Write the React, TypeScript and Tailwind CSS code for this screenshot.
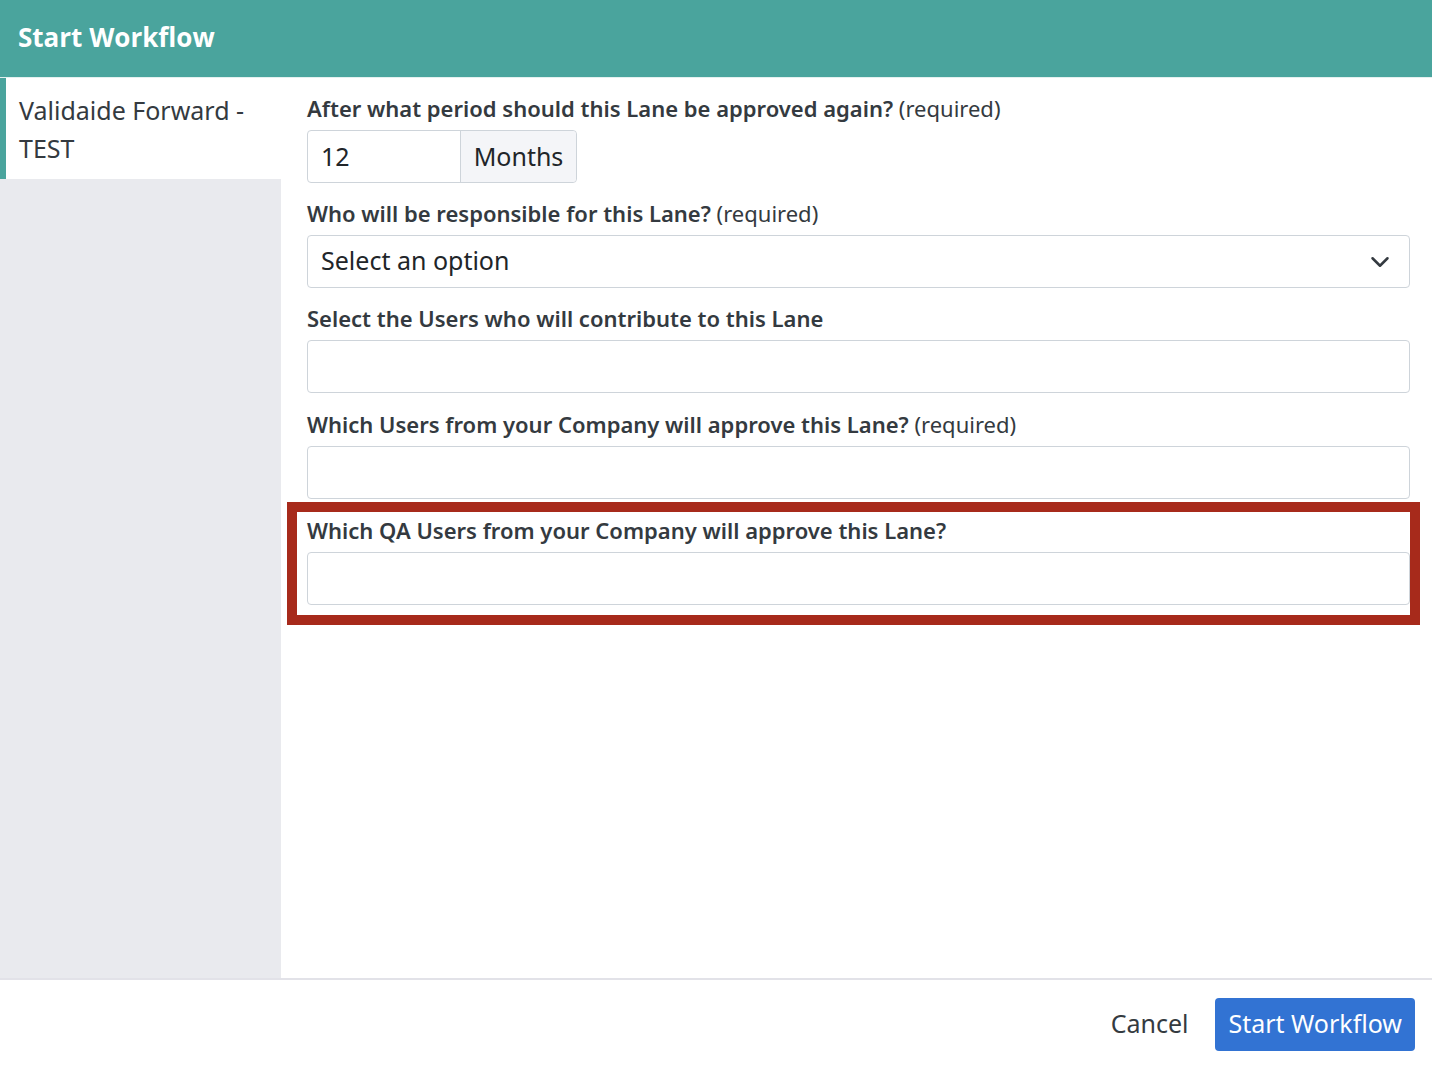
import { ChevronDown } from "lucide-react";

const font = { fontFamily: '"Noto Sans", "Open Sans", sans-serif' };

const Field = ({ label, required }: { label: string; required?: boolean }) => (
  <div className="mb-[16px]">
    <div className="mb-[7px] h-[30px] text-[22px] leading-[30px] text-[#343a40]">
      <span className="font-semibold">{label}</span>
      {required && <span> (required)</span>}
    </div>
    <div className="h-[53px] w-full rounded-[4px] border border-[#ced4da] bg-white"></div>
  </div>
);

export default function App() {
  return (
    <div className="flex h-[1068px] w-[1432px] flex-col bg-white" style={font}>
      <div className="flex h-[77px] items-center bg-[#4aa49d] pb-[3px] pl-[18px]">
        <h1
          className="text-[26px] font-bold text-white"
          style={{ fontFamily: '"Open Sans", sans-serif' }}
        >
          Start Workflow
        </h1>
      </div>
      <div className="flex flex-1 border-t border-[#e4f0ef]">
        <div className="w-[281px] bg-[#e9eaee]">
          <div className="border-l-[6px] border-[#4aa49d] bg-white pb-[12px] pl-[13px] pr-4 pt-[13px] text-[25px] leading-[38px] text-[#343a40]">
            Validaide Forward -
            <br />
            TEST
          </div>
        </div>
        <div className="flex-1 pl-[26px] pr-[22px] pt-[15px]">
          <div className="mb-[15px]">
            <div className="mb-[7px] h-[30px] text-[22px] leading-[30px] text-[#343a40]">
              <span className="font-semibold">After what period should this Lane be approved again?</span>
              <span> (required)</span>
            </div>
            <div className="flex h-[53px] w-[270px] rounded-[4px] border border-[#ced4da] text-[25px] text-[#212529]">
              <div className="flex w-[153px] items-center border-r border-[#ced4da] pl-[13px]">12</div>
              <div className="flex flex-1 items-center justify-center rounded-r-[4px] bg-[#f4f5f8]">Months</div>
            </div>
          </div>
          <div className="mb-[15px]">
            <div className="mb-[7px] h-[30px] text-[22px] leading-[30px] text-[#343a40]">
              <span className="font-semibold">Who will be responsible for this Lane?</span>
              <span> (required)</span>
            </div>
            <div className="flex h-[53px] w-full items-center justify-between rounded-[4px] border border-[#ced4da] pb-[2px] pl-[13px] pr-[14px] text-[25px] text-[#212529]">
              <span>Select an option</span>
              <ChevronDown size={30} strokeWidth={2} className="mt-[2px] text-[#343a40]" />
            </div>
          </div>
          <Field label="Select the Users who will contribute to this Lane" />
          <Field label="Which Users from your Company will approve this Lane?" required />
          <div className="relative">
            <div className="pointer-events-none absolute -bottom-[20px] -left-[20px] -right-[10px] -top-[13px] border-[10px] border-[#a72a1b]"></div>
            <Field label="Which QA Users from your Company will approve this Lane?" />
          </div>
        </div>
      </div>
      <div className="flex h-[90px] items-center justify-end gap-[27px] border-t-2 border-[#e2e2e8] pr-[17px]">
        <span className="text-[25px] text-[#343a40]">Cancel</span>
        <button className="h-[53px] rounded-[4px] bg-[#3273d3] px-[13px] text-[25px] text-white">
          Start Workflow
        </button>
      </div>
    </div>
  );
}
